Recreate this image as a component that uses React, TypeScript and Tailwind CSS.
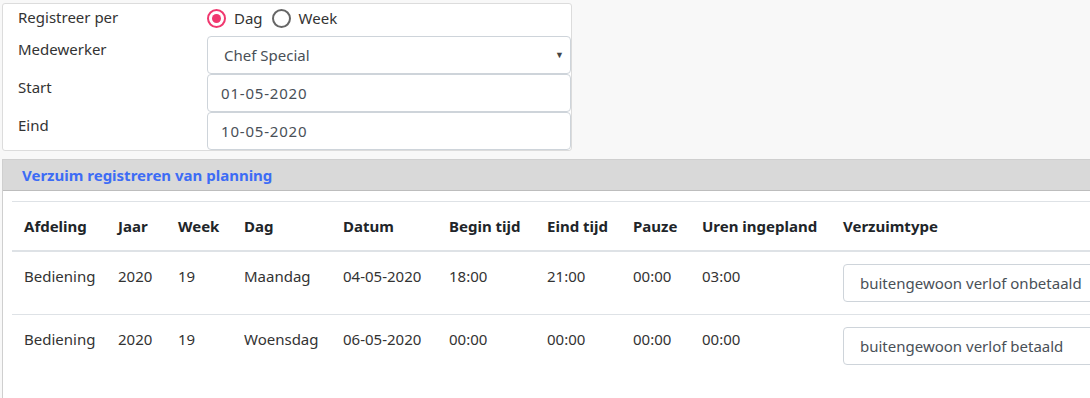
import React from "react";

const rows = [
  { afd: "Bediening", jaar: "2020", week: "19", dag: "Maandag", datum: "04-05-2020", begin: "18:00", eind: "21:00", pauze: "00:00", uren: "03:00", type: "buitengewoon verlof onbetaald" },
  { afd: "Bediening", jaar: "2020", week: "19", dag: "Woensdag", datum: "06-05-2020", begin: "00:00", eind: "00:00", pauze: "00:00", uren: "00:00", type: "buitengewoon verlof betaald" },
];

function Radio({ checked, label }: { checked: boolean; label: string }) {
  return (
    <span className="flex items-center gap-[8px]">
      <span
        className={
          checked
            ? "w-[19px] h-[19px] rounded-full border-2 border-[#f0386f] flex items-center justify-center"
            : "w-[19px] h-[19px] rounded-full border-2 border-[#666666]"
        }
      >
        {checked && <span className="w-[9px] h-[9px] rounded-full bg-[#f0386f]" />}
      </span>
      <span>{label}</span>
    </span>
  );
}

export default function App() {
  return (
    <div className="w-[1090px] h-[398px] overflow-hidden bg-[#f8f8f8] font-['Noto_Sans',sans-serif] text-[15px] leading-6 text-[#212529]">
      <div className="ml-[2px] mt-[3px] w-[570px] h-[148px] bg-white border border-[#dcdcdc] rounded-[3px] flex flex-col">
        <div className="flex h-[33px]">
          <div className="w-[204px] pl-[15px] pt-[1px] text-[#333]">Registreer per</div>
          <div className="flex items-start pt-[2px] gap-[9px] text-[#333]">
            <Radio checked label="Dag" />
            <Radio checked={false} label="Week" />
          </div>
        </div>
        <div className="flex h-[38px]">
          <div className="w-[204px] pl-[15px] pt-[1px] text-[#333]">Medewerker</div>
          <div className="flex-1 h-[38px] border border-[#ced4da] rounded-[4px] flex items-center justify-between pl-[16px] pr-[6px] text-[#495057]">
            <span>Chef Special</span>
            <span className="text-[9px] text-[#444]">▼</span>
          </div>
        </div>
        <div className="flex h-[38px]">
          <div className="w-[204px] pl-[15px] pt-[1px] text-[#333]">Start</div>
          <div className="flex-1 h-[38px] border border-[#ced4da] rounded-[4px] flex items-center pl-[13px] text-[#495057] tracking-[0.8px]">
            01-05-2020
          </div>
        </div>
        <div className="flex h-[38px]">
          <div className="w-[204px] pl-[15px] pt-[1px] text-[#333]">Eind</div>
          <div className="flex-1 h-[38px] border border-[#ced4da] rounded-[4px] flex items-center pl-[13px] text-[#495057] tracking-[0.8px]">
            10-05-2020
          </div>
        </div>
      </div>

      <div className="ml-[2px] mt-[8px] bg-white border-l border-t border-[#cfcfcf] h-[240px]">
        <div className="h-[31px] bg-[#d9d9d9] border-b border-[#bdbdbd] pl-[19px] flex items-center">
          <span className="font-bold text-[#3d6cf5] text-[15px]">Verzuim registreren van planning</span>
        </div>
        <div className="pl-[9px] pt-[10px]">
          <table className="w-[1200px] border-collapse table-fixed">
            <colgroup>
              <col className="w-[94px]" />
              <col className="w-[60px]" />
              <col className="w-[66px]" />
              <col className="w-[99px]" />
              <col className="w-[106px]" />
              <col className="w-[98px]" />
              <col className="w-[86px]" />
              <col className="w-[69px]" />
              <col className="w-[141px]" />
              <col />
            </colgroup>
            <thead>
              <tr className="border-t border-[#dee2e6] border-b-2 border-b-[#dee2e6]">
                {["Afdeling", "Jaar", "Week", "Dag", "Datum", "Begin tijd", "Eind tijd", "Pauze", "Uren ingepland", "Verzuimtype"].map((h) => (
                  <th key={h} className="p-[12px] text-left font-bold whitespace-nowrap">{h}</th>
                ))}
              </tr>
            </thead>
            <tbody>
              {rows.map((r, i) => (
                <tr key={i} className="border-t border-[#dee2e6] first:border-t-0">
                  {[r.afd, r.jaar, r.week, r.dag, r.datum, r.begin, r.eind, r.pauze, r.uren].map((c, j) => (
                    <td key={j} className="p-[12px] align-top whitespace-nowrap text-[#333]">{c}</td>
                  ))}
                  <td className="p-[12px] align-top">
                    <div className="h-[38px] w-[300px] border border-[#ced4da] rounded-[4px] flex items-center pl-[16px] text-[#495057] whitespace-nowrap">
                      {r.type}
                    </div>
                  </td>
                </tr>
              ))}
            </tbody>
          </table>
        </div>
      </div>
    </div>
  );
}
